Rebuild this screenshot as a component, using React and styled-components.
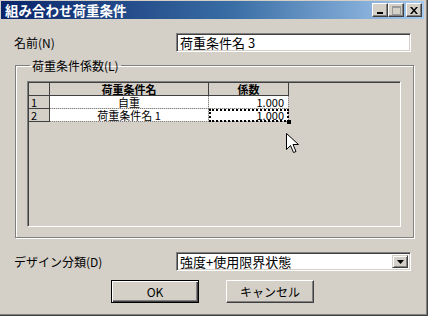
import React from "react";
import styled, { createGlobalStyle } from "styled-components";

const Global = createGlobalStyle`
  html, body { margin: 0; padding: 0; background: #d4d0c8; }
  body { font-family: "Noto Sans CJK JP", "Liberation Sans", sans-serif; font-size: 12px; color: #000; }
`;

const Window = styled.div`
  position: relative;
  width: 428px;
  height: 316px;
  box-sizing: border-box;
  padding: 1px 3px 3px 1px;
  background: #d4d0c8;
  border-right: 1px solid #404040;
  border-bottom: 1px solid #404040;
  box-shadow: inset -1px -1px #808080;
  display: flex;
  flex-direction: column;
`;

const TitleBar = styled.div`
  height: 18px;
  display: flex;
  align-items: center;
  justify-content: space-between;
  padding: 0 2px 0 4px;
  background: linear-gradient(to right, #0a246a, #3a6ea5 55%, #a6caf0);
  color: #fff;
  font-weight: bold;
  font-size: 13.5px;
`;

const Caps = styled.div`
  display: flex;
  align-items: center;
`;

const CapButton = styled.div`
  width: 16px;
  height: 14px;
  box-sizing: border-box;
  margin-left: ${(p) => (p.$gap ? "2px" : "0")};
  background: #d4d0c8;
  border-top: 1px solid #fff;
  border-left: 1px solid #fff;
  border-right: 1px solid #404040;
  border-bottom: 1px solid #404040;
  box-shadow: inset -1px -1px #808080;
  display: flex;
  align-items: center;
  justify-content: center;
`;

const Body = styled.div`
  flex: 1;
  display: flex;
  flex-direction: column;
  padding: 14px 0 0 13px;
`;

const FieldRow = styled.div`
  display: grid;
  grid-template-columns: 162px 235px;
  align-items: center;
  margin-top: ${(p) => p.$top || 0}px;
`;

const Label = styled.span`
  font-size: 12px;
`;

const Sunken = styled.div`
  position: relative;
  height: 19px;
  box-sizing: border-box;
  background: #fff;
  border-top: 1px solid #808080;
  border-left: 1px solid #808080;
  border-right: 1px solid #fff;
  border-bottom: 1px solid #fff;
  box-shadow: inset 1px 1px #404040, inset -1px -1px #d4d0c8;
  padding: 0 3px;
  display: flex;
  align-items: center;
  font-size: 13px;
`;

const DropButton = styled.div`
  position: absolute;
  right: 2px;
  top: 2px;
  width: 16px;
  height: 13px;
  box-sizing: border-box;
  background: #d4d0c8;
  border-top: 1px solid #d4d0c8;
  border-left: 1px solid #d4d0c8;
  border-right: 1px solid #404040;
  border-bottom: 1px solid #404040;
  box-shadow: inset 1px 1px #fff, inset -1px -1px #808080;
  display: flex;
  align-items: center;
  justify-content: center;
`;

const Group = styled.fieldset`
  width: 399px;
  margin: 5px 0 0 1px;
  padding: 7px 12px 10px 11px;
  box-sizing: border-box;
  border: 1px solid #808080;
  box-shadow: inset 1px 1px #fff, 1px 1px #fff;
  legend {
    padding: 0 2px;
    margin-left: 3px;
    font-size: 12px;
  }
`;

const GridBox = styled.div`
  height: 146px;
  box-sizing: border-box;
  background: #d4d0c8;
  border-top: 1px solid #808080;
  border-left: 1px solid #808080;
  border-right: 1px solid #fff;
  border-bottom: 1px solid #fff;
  box-shadow: inset 1px 1px #404040;
  padding: 1px 0 0 1px;
`;

const Table = styled.table`
  border-collapse: collapse;
  table-layout: fixed;
  font-size: 11px;
  td, th { padding: 0; height: 12px; line-height: 12px; }
`;

const Head = styled.th`
  width: ${(p) => p.$w}px;
  background: #d4d0c8;
  font-weight: bold;
  text-align: center;
  border-right: 1px solid #404040;
  border-bottom: 1px solid #404040;
`;

const RowHead = styled.td`
  background: #d4d0c8;
  text-align: left;
  padding-left: 2px !important;
  border-right: 1px solid #404040;
  border-bottom: 1px solid #404040;
`;

const Cell = styled.td`
  position: relative;
  background: #fff;
  text-align: ${(p) => p.$align || "center"};
  padding-right: ${(p) => (p.$align === "right" ? "4px" : "0")} !important;
  border-right: 1px dotted #808080;
  border-bottom: 1px dotted #808080;
  ${(p) =>
    p.$focus &&
    `
    outline: 2px dotted #000;
    outline-offset: -2px;
    &::after {
      content: "";
      position: absolute;
      right: -3px;
      bottom: -3px;
      width: 4px;
      height: 4px;
      background: #000;
    }
  `}
`;

const Buttons = styled.div`
  display: flex;
  justify-content: center;
  gap: 27px;
  margin-top: 9px;
  padding-right: 13px;
`;

const Button = styled.div`
  width: 88px;
  height: 23px;
  box-sizing: border-box;
  display: flex;
  align-items: center;
  justify-content: center;
  background: #d4d0c8;
  font-size: 12px;
  ${(p) =>
    p.$default
      ? `border: 1px solid #000;
         box-shadow: inset 1px 1px #fff, inset -1px -1px #404040, inset -2px -2px #808080;`
      : `border-top: 1px solid #fff; border-left: 1px solid #fff;
         border-right: 1px solid #404040; border-bottom: 1px solid #404040;
         box-shadow: inset -1px -1px #808080;`}
`;

const Cursor = styled.svg`
  position: absolute;
  left: 286px;
  top: 133px;
`;

export default function App() {
  return (
    <Window>
      <Global />
      <TitleBar>
        <span>組み合わせ荷重条件</span>
        <Caps>
          <CapButton>
            <svg width="8" height="7"><rect x="1" y="5" width="6" height="2" fill="#000" /></svg>
          </CapButton>
          <CapButton>
            <svg width="9" height="9"><rect x="0.5" y="0.5" width="8" height="8" fill="none" stroke="#9a9a9a" /><rect x="0" y="0" width="9" height="2" fill="#9a9a9a" /></svg>
          </CapButton>
          <CapButton $gap>
            <svg width="8" height="7"><path d="M0 0l2 0 2 2.5 2-2.5 2 0-3 3.5 3 3.5-2 0-2-2.5-2 2.5-2 0 3-3.5z" fill="#000" /></svg>
          </CapButton>
        </Caps>
      </TitleBar>
      <Body>
        <FieldRow>
          <Label>名前(N)</Label>
          <Sunken>荷重条件名 3</Sunken>
        </FieldRow>
        <Group>
          <legend>荷重条件係数(L)</legend>
          <GridBox>
            <Table>
              <thead>
                <tr>
                  <Head $w={20} />
                  <Head $w={158}>荷重条件名</Head>
                  <Head $w={79}>係数</Head>
                </tr>
              </thead>
              <tbody>
                <tr>
                  <RowHead>1</RowHead>
                  <Cell>自重</Cell>
                  <Cell $align="right">1.000</Cell>
                </tr>
                <tr>
                  <RowHead>2</RowHead>
                  <Cell>荷重条件名 1</Cell>
                  <Cell $align="right" $focus>1.000</Cell>
                </tr>
              </tbody>
            </Table>
          </GridBox>
        </Group>
        <FieldRow $top={14}>
          <Label>デザイン分類(D)</Label>
          <Sunken>
            強度+使用限界状態
            <DropButton>
              <svg width="7" height="4"><path d="M0 0h7L3.5 4z" fill="#000" /></svg>
            </DropButton>
          </Sunken>
        </FieldRow>
        <Buttons>
          <Button $default>OK</Button>
          <Button>キャンセル</Button>
        </Buttons>
      </Body>
      <Cursor width="13" height="21" viewBox="0 0 13 21">
        <path d="M0.5 0.5v16l4-4 3 7 2.5-1-3-7h5.5z" fill="#fff" stroke="#000" strokeWidth="1" />
      </Cursor>
    </Window>
  );
}
